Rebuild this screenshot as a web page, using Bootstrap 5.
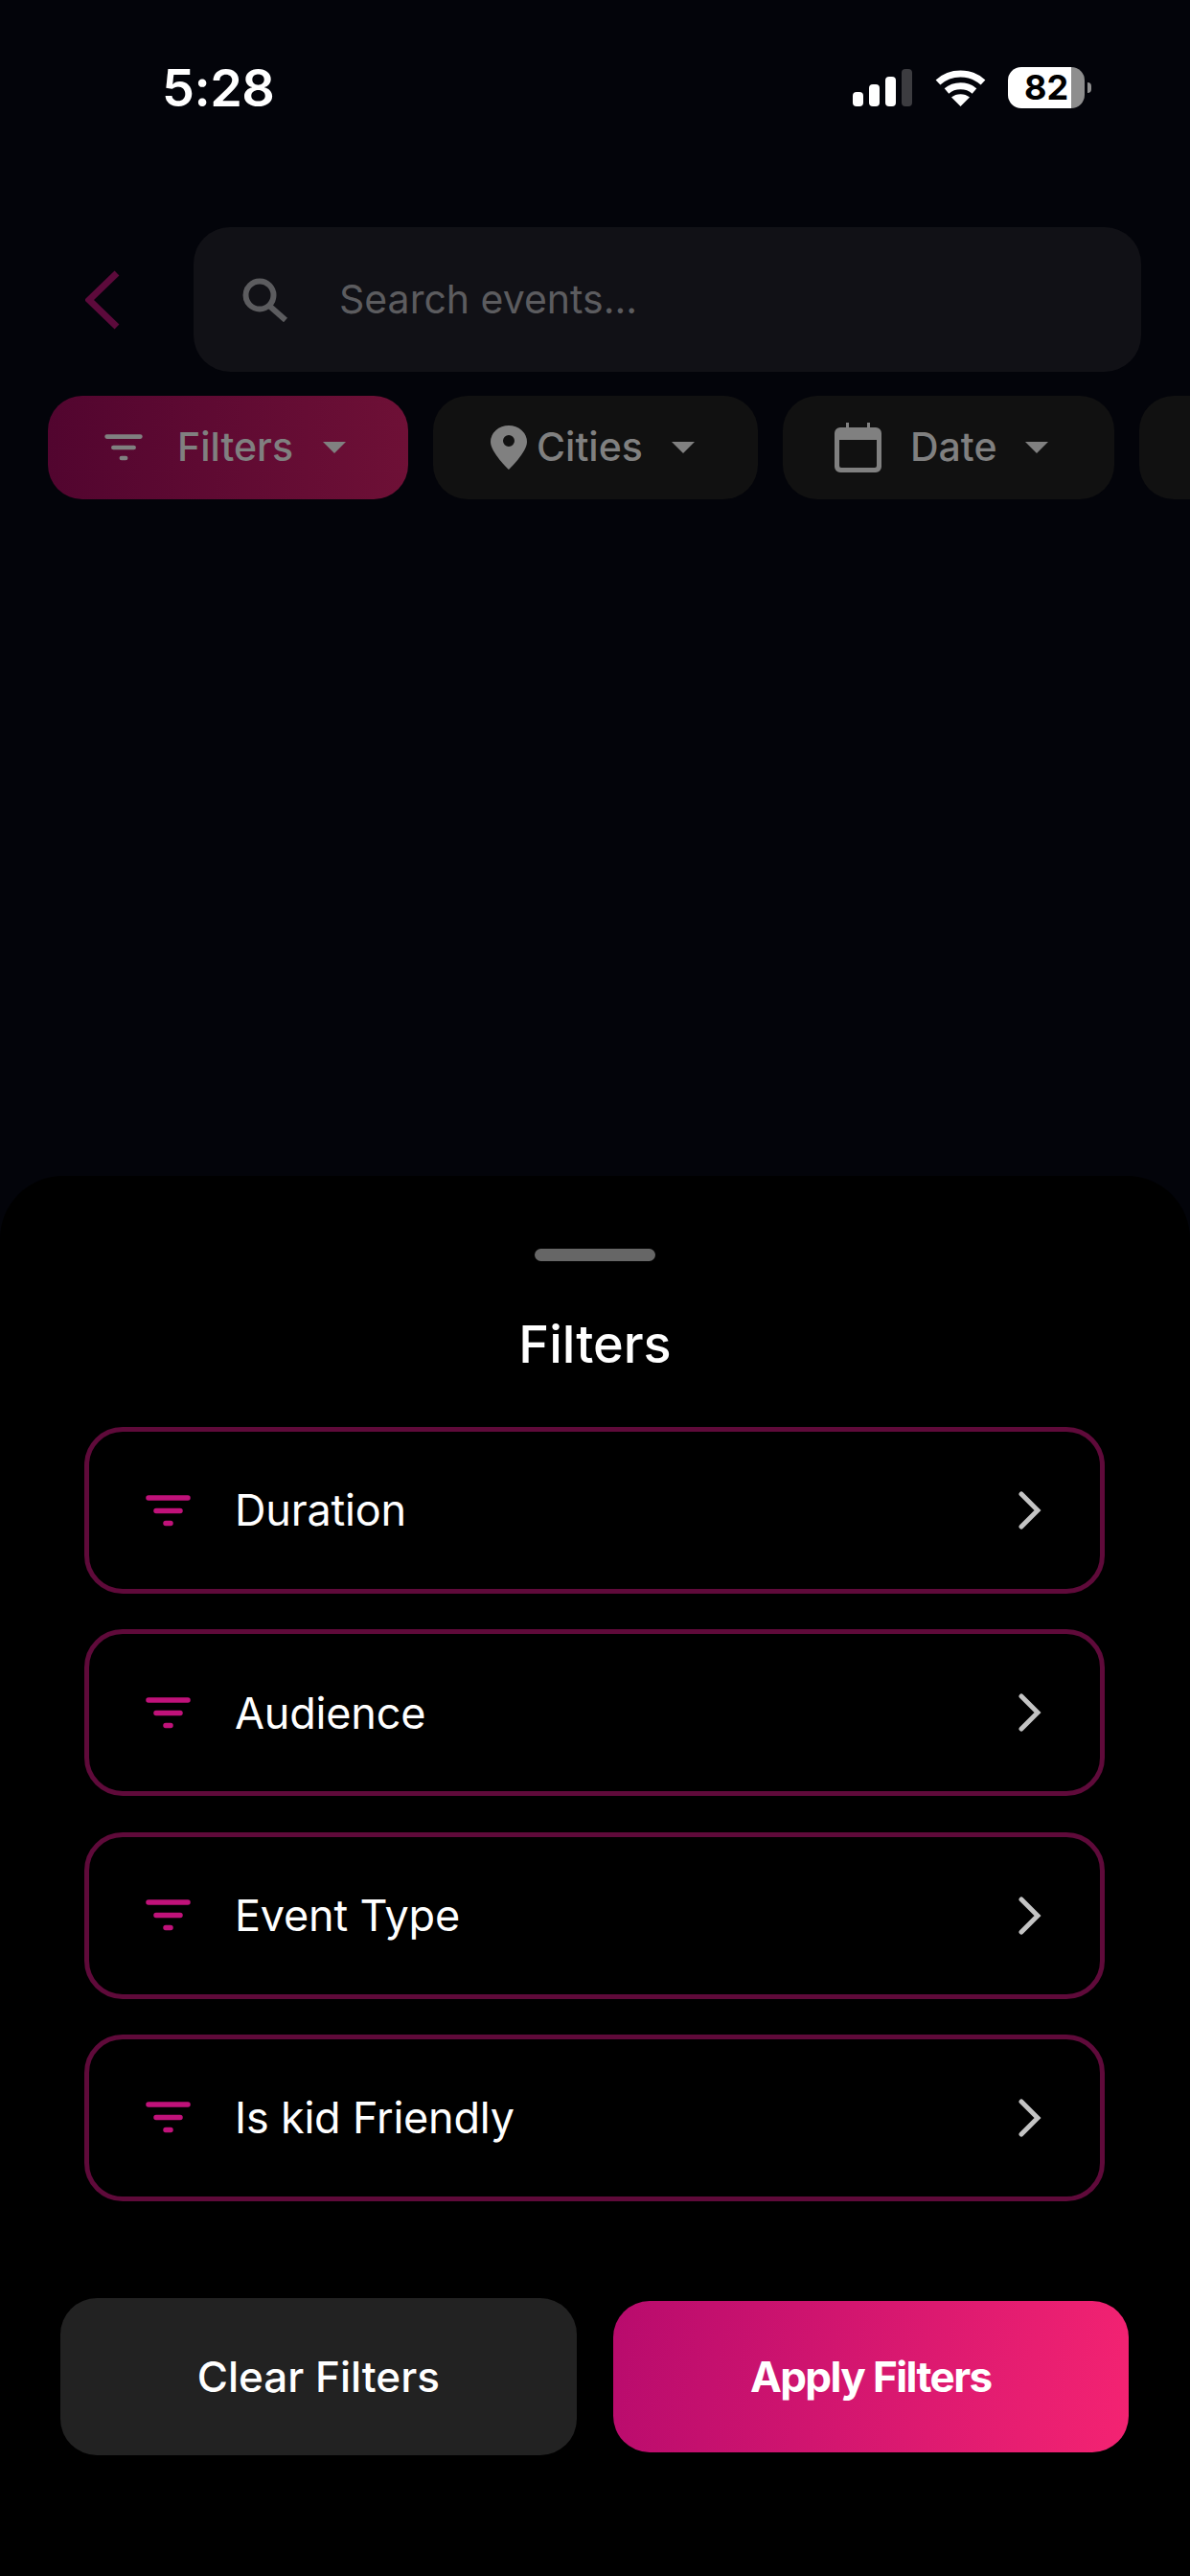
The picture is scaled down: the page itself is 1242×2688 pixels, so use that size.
<!DOCTYPE html>
<html lang="en">
<head>
    <meta charset="UTF-8">
    <meta name="viewport" content="width=device-width, initial-scale=1.0">
    <title>Event Filters</title>
    <link href="https://cdn.jsdelivr.net/npm/bootstrap@5.3.0/dist/css/bootstrap.min.css" rel="stylesheet">
    <style>
        body { background: #03040a; font-family: Inter, "Liberation Sans", sans-serif; }
        .screen { width: 1242px; height: 2688px; overflow: hidden; }

        /* status bar */
        .status-row { height: 43px; margin-top: 70px; padding: 0 103px 0 169px; }
        .clock { font-size: 54px; font-weight: 600; line-height: 43px; color: #fff; letter-spacing: -.5px; }
        .battery-box { width: 80px; height: 43px; border-radius: 14px; overflow: hidden; background: linear-gradient(90deg, #fff 82.5%, #8e8e8e 82.5%); color: #000; font-size: 36px; font-weight: 700; line-height: 43px; padding-left: 17px; }
        .battery-nub { width: 4px; height: 11px; margin-left: 3px; border-radius: 0 6px 6px 0; background: #8e8e8e; }

        /* dimmed page behind the sheet */
        .search-row { margin-top: 124px; padding: 0 51px 0 89px; gap: 77px; }
        .search-box { flex: 1; height: 151px; border-radius: 38px; background: #111116; color: #5c5c5f; font-size: 41px; padding-left: 51px; gap: 53px; }
        .chip-row { margin-top: 25px; padding-left: 50px; gap: 26px; overflow: hidden; }
        .chip { height: 108px; border-radius: 36px; background: #111; color: #808080; font-size: 41px; font-weight: 500; flex-shrink: 0; }
        .chip-filters { width: 376px; padding-left: 58px; background: linear-gradient(90deg, #52052f, #6e1036); }
        .filters-text { margin: 0 31px 0 35px; }
        .cities-text { margin: 0 30px 0 10px; }
        .date-text { margin: 0 29px 0 30px; }
        .chip-cities { width: 339px; padding-left: 60px; }
        .chip-date { width: 346px; padding-left: 54px; }
        .chip-more { width: 100px; }
        .chip-caret { width: 0; height: 0; border-left: 12px solid transparent; border-right: 12px solid transparent; border-top: 12px solid #808080; }

        /* bottom sheet */
        .sheet { height: 1461px; background: #000; border-radius: 66px 66px 0 0; padding-top: 76px; }
        .sheet-handle { width: 126px; height: 13px; border-radius: 7px; background: #666; }
        .sheet-title { font-size: 54px; line-height: 54px; font-weight: 500; color: #fff; margin: 60px 0 59px; }
        .filter-list { padding: 0 89px 0 88px; gap: 37.33px; }
        .filter-item { height: 174px; border: 5px solid #5f0a3a; border-radius: 40px; padding: 0 61px 0 59px; color: #fff; font-size: 45px; letter-spacing: -.2px; }
        .filter-label { margin-left: 46px; }
        .action-row { margin-top: 101px; padding: 0 64px 0 63px; gap: 38px; }
        .action-btn { width: 539px; color: #fff; font-size: 44px; border: 0; border-radius: 38px; }
        .action-btn:hover, .action-btn:active { color: #fff; }
        .btn-clear { height: 164px; background: #222; font-weight: 500; }
        .btn-apply { height: 158px; background: linear-gradient(100deg, #b80b6d, #f42372); font-weight: 700; letter-spacing: -1.6px; }
    </style>
</head>

<body>
    <svg width="0" height="0" class="position-absolute">
        <symbol id="filter-lines" viewBox="0 0 47 33">
            <g fill="none" stroke-width="5.5" stroke-linecap="round">
                <path d="M3 3H44M11 16.5H36M21 29.5H26"/>
            </g>
        </symbol>
    </svg>

    <div class="screen d-flex flex-column">
        <div class="status-row d-flex justify-content-between align-items-center">
            <span class="clock">5:28</span>
            <div class="d-flex align-items-center">
                <svg width="62" height="40" viewBox="0 0 62 40" class="me-4">
                    <rect x="0" y="24" width="11" height="15" rx="4" fill="#fff"/>
                    <rect x="17" y="16" width="11" height="23" rx="4" fill="#fff"/>
                    <rect x="34" y="8" width="11" height="31" rx="4" fill="#fff"/>
                    <rect x="51" y="0" width="11" height="39" rx="4" fill="#3c3c40"/>
                </svg>
                <svg width="53" height="39" viewBox="0 0 53 39" style="margin-right:23px">
                    <path d="M3 14C16 2 37 2 50 14" fill="none" stroke="#fff" stroke-width="7"/>
                    <path d="M12 23C20 16 33 16 41 23" fill="none" stroke="#fff" stroke-width="7"/>
                    <path d="M26.5 39L17 29.500C22 25 31 25 36 29.500Z" fill="#fff"/>
                </svg>
                <div class="battery-box">82</div>
                <div class="battery-nub"></div>
            </div>
        </div>

        <div class="search-row d-flex align-items-center">
            <svg width="36" height="62" viewBox="0 0 36 62" class="flex-shrink-0">
                <path d="M33 3L4 31L33 59" fill="none" stroke="#5c0a3b" stroke-width="7"/>
            </svg>
            <div class="search-box d-flex align-items-center">
                <svg width="48" height="46" viewBox="0 0 48 46" class="flex-shrink-0">
                    <circle cx="18" cy="18" r="14.500" fill="none" stroke="#5c5c5f" stroke-width="6"/>
                    <path d="M28 29L45 44" fill="none" stroke="#5c5c5f" stroke-width="6"/>
                </svg>
                <span>Search events...</span>
            </div>
        </div>

        <div class="chip-row d-flex">
            <div class="chip chip-filters d-flex align-items-center">
                <svg width="42" height="28" class="flex-shrink-0" stroke="#808080"><use href="#filter-lines"/></svg>
                <span class="filters-text">Filters</span>
                <span class="chip-caret"></span>
            </div>
            <div class="chip chip-cities d-flex align-items-center">
                <svg width="38" height="46" viewBox="0 0 38 46" class="flex-shrink-0">
                    <path fill="#808080" fill-rule="evenodd" d="M19 46C19 46 38 28 38 17A19 17 0 0 0 0 17C0 28 19 46 19 46ZM19 22A6 6 0 1 0 19 10A6 6 0 0 0 19 22Z"/>
                </svg>
                <span class="cities-text">Cities</span>
                <span class="chip-caret"></span>
            </div>
            <div class="chip chip-date d-flex align-items-center">
                <svg width="49" height="52" viewBox="0 0 49 52" class="flex-shrink-0">
                    <path fill="#808080" fill-rule="evenodd" d="M12 0H15V5H34V0H37V5H43A6 6 0 0 1 49 11V46A6 6 0 0 1 43 52H6A6 6 0 0 1 0 46V11A6 6 0 0 1 6 5H12ZM5 18V45A2 2 0 0 0 7 47H42A2 2 0 0 0 44 45V18Z"/>
                </svg>
                <span class="date-text">Date</span>
                <span class="chip-caret"></span>
            </div>
            <div class="chip chip-more"></div>
        </div>

        <div class="sheet mt-auto">
            <div class="sheet-handle mx-auto"></div>
            <div class="sheet-title text-center">Filters</div>
            <div class="filter-list d-flex flex-column">
                <div class="filter-item d-flex align-items-center">
                    <svg width="47" height="33" stroke="#c0127a"><use href="#filter-lines"/></svg>
                    <span class="filter-label flex-grow-1">Duration</span>
                    <svg width="24" height="40" viewBox="0 0 24 40"><path d="M3 3L20 20L3 37" fill="none" stroke="#c4c4c4" stroke-width="5" stroke-linecap="round"/></svg>
                </div>
                <div class="filter-item d-flex align-items-center">
                    <svg width="47" height="33" stroke="#c0127a"><use href="#filter-lines"/></svg>
                    <span class="filter-label flex-grow-1">Audience</span>
                    <svg width="24" height="40" viewBox="0 0 24 40"><path d="M3 3L20 20L3 37" fill="none" stroke="#c4c4c4" stroke-width="5" stroke-linecap="round"/></svg>
                </div>
                <div class="filter-item d-flex align-items-center">
                    <svg width="47" height="33" stroke="#c0127a"><use href="#filter-lines"/></svg>
                    <span class="filter-label flex-grow-1">Event Type</span>
                    <svg width="24" height="40" viewBox="0 0 24 40"><path d="M3 3L20 20L3 37" fill="none" stroke="#c4c4c4" stroke-width="5" stroke-linecap="round"/></svg>
                </div>
                <div class="filter-item d-flex align-items-center">
                    <svg width="47" height="33" stroke="#c0127a"><use href="#filter-lines"/></svg>
                    <span class="filter-label flex-grow-1">Is kid Friendly</span>
                    <svg width="24" height="40" viewBox="0 0 24 40"><path d="M3 3L20 20L3 37" fill="none" stroke="#c4c4c4" stroke-width="5" stroke-linecap="round"/></svg>
                </div>
            </div>
            <div class="action-row d-flex align-items-center">
                <button type="button" class="btn action-btn btn-clear">Clear Filters</button>
                <button type="button" class="btn action-btn btn-apply">Apply Filters</button>
            </div>
        </div>
    </div>

    <script src="https://cdn.jsdelivr.net/npm/bootstrap@5.3.0/dist/js/bootstrap.bundle.min.js"></script>
</body>
</html>
